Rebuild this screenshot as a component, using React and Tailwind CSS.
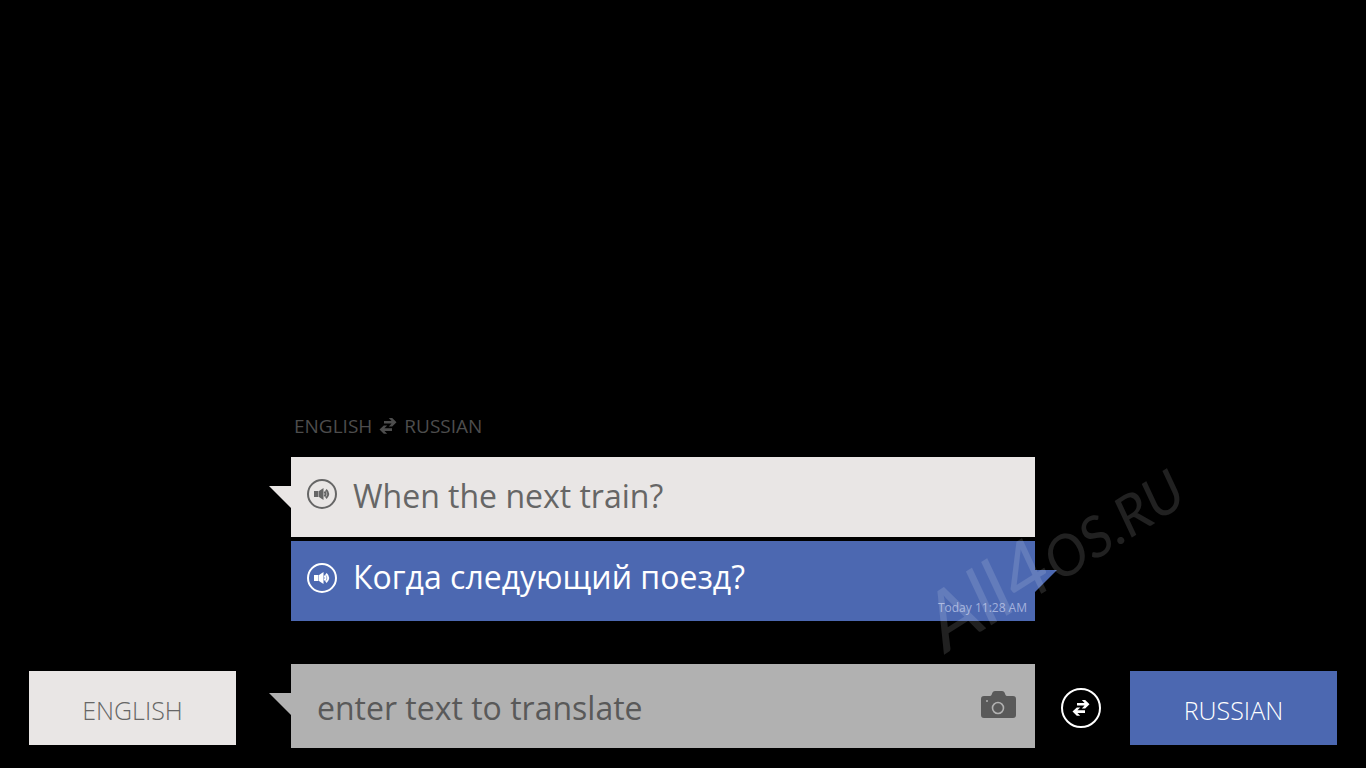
import { useState } from 'react';
import clsx from 'clsx';

const SwapArrows = ({ className }) => (
    <svg viewBox="0 0 18 18" className={className} fill="currentColor" aria-hidden="true">
        <path d="M5 3.9H12.6L9.8 1H13.2L17.5 5.2L13.2 9.4H9.8L12.6 6.5H5Z" />
        <path d="M13 11.3H5.4L8.2 8.4H4.8L0.5 12.6L4.8 16.8H8.2L5.4 13.9H13Z" />
    </svg>
);

const SpeakerIcon = () => (
    <svg viewBox="0 0 16 14" className="w-4 h-[14px]" aria-hidden="true">
        <path d="M0 4H4.5V10H0Z M5 4L9.5 1V13L5 10Z" fill="currentColor" />
        <path d="M10.5 4.5Q12.8 7 10.5 9.5M12 2.8Q16.5 7 12 11.2" fill="none" stroke="currentColor" strokeWidth="2" />
    </svg>
);

const CameraIcon = () => (
    <svg viewBox="0 0 35 27" className="w-[35px] h-[27px]" aria-hidden="true">
        <path
            d="M3 5H9Q10 5 10.5 4L11.5 1.5Q12 0 14 0H21Q23 0 23.5 1.5L24.5 4Q25 5 26 5H32Q35 5 35 8V24Q35 27 32 27H3Q0 27 0 24V8Q0 5 3 5Z"
            fill="#595959"
        />
        <circle cx="17" cy="17" r="5.5" fill="none" stroke="#b1b1b1" strokeWidth="1.6" />
        <circle cx="6" cy="10" r="1" fill="#b1b1b1" />
    </svg>
);

const Tail = ({ side, className }) => (
    <span
        className={clsx(
            'absolute top-[29px] size-[22px]',
            side === 'left'
                ? 'right-full [clip-path:polygon(0_0,100%_0,100%_100%)]'
                : 'left-full [clip-path:polygon(0_0,100%_0,0_100%)]',
            className
        )}
    />
);

const Message = ({ text, lang, side, time, className, textClassName, tailClassName }) => (
    <li className={clsx('relative flex items-start gap-4 h-20 px-4 pt-[22px]', className)}>
        <Tail side={side} className={tailClassName} />
        <button
            type="button"
            aria-label="Listen"
            className="size-[30px] shrink-0 rounded-full border-2 border-current flex justify-center items-center"
        >
            <SpeakerIcon />
        </button>
        <p lang={lang} className={clsx('text-[32px]', textClassName)}>{text}</p>
        {time && (
            <time className="absolute right-2 bottom-1 text-xs leading-[18px] text-[#a3b1dc]">{time}</time>
        )}
    </li>
);

export default function App() {
    const [text, setText] = useState('');

    return (
        <main className="min-h-screen bg-black flex flex-col justify-end px-[29px] pb-5 overflow-hidden font-['Open_Sans','Noto_Sans',sans-serif]">
            <div className="grid grid-cols-[207px_minmax(0,1fr)_40px_236px] items-end">
                <section className="relative col-start-2 ml-[55px] mr-[26px] mb-[43px]">
                    <h2 className="flex items-center gap-[7px] pl-[3px] mb-4 text-[19px] leading-[30px] text-[#4d4d4d]">
                        <span>ENGLISH</span>
                        <SwapArrows className="size-[18px]" />
                        <span>RUSSIAN</span>
                    </h2>
                    <ul className="flex flex-col gap-1">
                        <Message
                            text="When the next train?"
                            lang="en"
                            side="left"
                            className="bg-[#e9e6e5] text-[#666666]"
                            textClassName="leading-[34px]"
                            tailClassName="bg-[#e9e6e5]"
                        />
                        <Message
                            text="Когда следующий поезд?"
                            lang="ru"
                            side="right"
                            time="Today 11:28 AM"
                            className="bg-[#4c68b1] text-white"
                            textClassName="leading-7"
                            tailClassName="bg-[#4c68b1]"
                        />
                    </ul>
                    <div className="absolute left-full bottom-0 -ml-[84px] -mb-10 origin-bottom-left -rotate-32 pointer-events-none select-none whitespace-nowrap leading-none italic text-white/13 font-['Lato',sans-serif]">
                        <span className="text-[80px]">All4</span>
                        <span className="text-[56px]">OS.RU</span>
                    </div>
                </section>

                <button
                    type="button"
                    className="col-start-1 h-[74px] mb-[3px] pt-1.5 bg-[#e9e6e5] text-[#666666] text-[25px] font-light"
                >
                    ENGLISH
                </button>
                <div className="relative ml-[55px] mr-[26px] h-[84px] flex items-center bg-[#b1b1b1] pr-[19px]">
                    <Tail side="left" className="bg-[#b1b1b1]" />
                    <input
                        type="text"
                        aria-label="Text to translate"
                        placeholder="enter text to translate"
                        value={text}
                        onChange={e => setText(e.target.value)}
                        className="flex-1 min-w-0 h-full pl-[26px] pt-0.5 bg-transparent outline-none text-[32px] text-[#595959] placeholder:text-[#595959]"
                    />
                    <button type="button" aria-label="Translate from camera" className="pb-1">
                        <CameraIcon />
                    </button>
                </div>
                <button
                    type="button"
                    aria-label="Swap languages"
                    className="size-10 mb-5 rounded-full border-2 border-white text-white flex justify-center items-center"
                >
                    <SwapArrows className="size-[18px]" />
                </button>
                <button
                    type="button"
                    className="h-[74px] mb-[3px] ml-[29px] pt-1.5 bg-[#4c68b1] text-white text-[25px] font-light"
                >
                    RUSSIAN
                </button>
            </div>
        </main>
    );
}
